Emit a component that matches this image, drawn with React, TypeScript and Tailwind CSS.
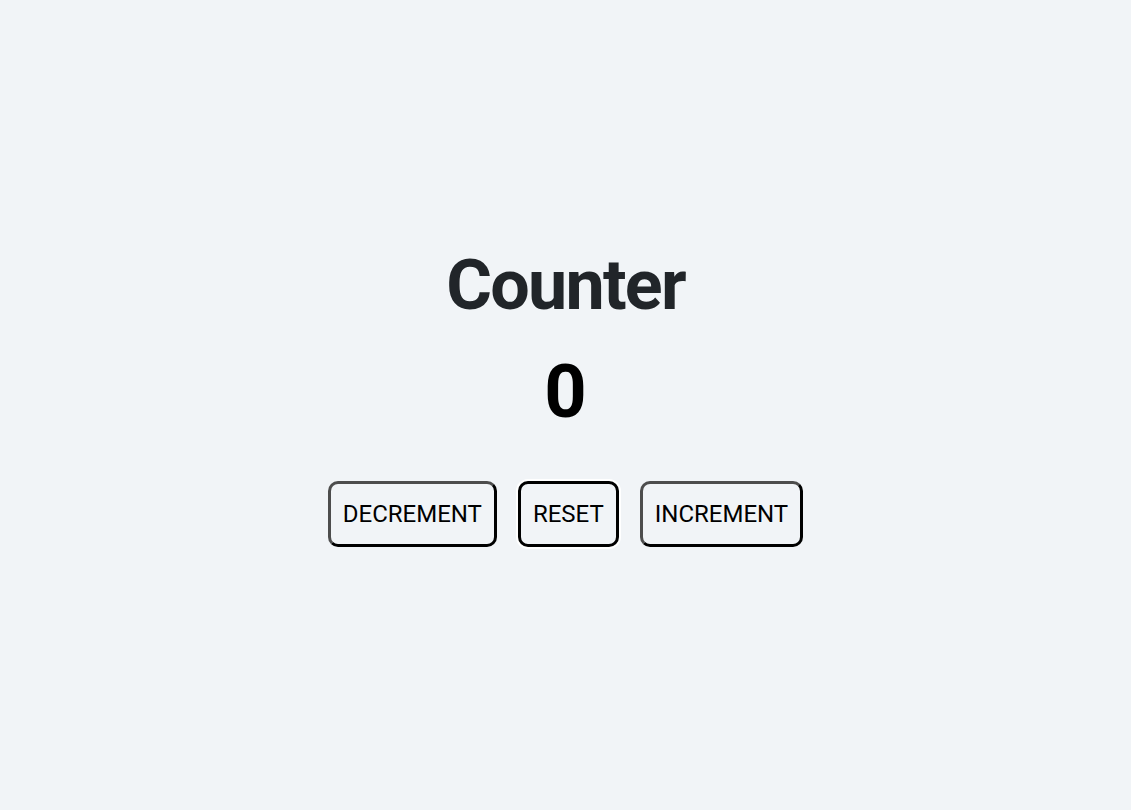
import { useState } from 'react'

const base =
  'rounded-[10px] border-[3px] px-3 py-4 text-[24px] leading-[28px] text-black bg-[#f1f4f7]'
const outset = 'border-t-[#4d4d4d] border-l-[#4d4d4d] border-r-black border-b-black'

export default function App() {
  const [count, setCount] = useState(0)

  return (
    <div className="min-h-screen bg-[#f1f4f7] flex flex-col items-center justify-center pb-[13px] font-['Roboto',sans-serif]">
      <h1 className="text-[70px] leading-none font-bold tracking-tight text-[#212529]">Counter</h1>
      <div className="mt-[35px] text-[74px] leading-none font-bold text-black">{count}</div>
      <div className="mt-[52px] flex items-center gap-[21px]">
        <button className={`${base} ${outset}`} onClick={() => setCount(count - 1)}>
          DECREMENT
        </button>
        <button
          className={`${base} border-black ring-2 ring-white`}
          onClick={() => setCount(0)}
        >
          RESET
        </button>
        <button className={`${base} ${outset}`} onClick={() => setCount(count + 1)}>
          INCREMENT
        </button>
      </div>
    </div>
  )
}
